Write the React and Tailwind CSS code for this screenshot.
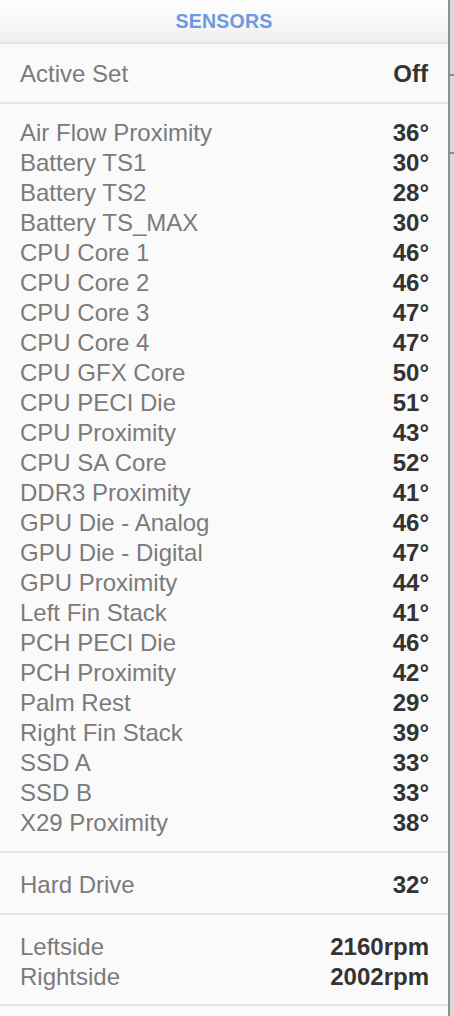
const sensors = [
  ["Air Flow Proximity", "36°"],
  ["Battery TS1", "30°"],
  ["Battery TS2", "28°"],
  ["Battery TS_MAX", "30°"],
  ["CPU Core 1", "46°"],
  ["CPU Core 2", "46°"],
  ["CPU Core 3", "47°"],
  ["CPU Core 4", "47°"],
  ["CPU GFX Core", "50°"],
  ["CPU PECI Die", "51°"],
  ["CPU Proximity", "43°"],
  ["CPU SA Core", "52°"],
  ["DDR3 Proximity", "41°"],
  ["GPU Die - Analog", "46°"],
  ["GPU Die - Digital", "47°"],
  ["GPU Proximity", "44°"],
  ["Left Fin Stack", "41°"],
  ["PCH PECI Die", "46°"],
  ["PCH Proximity", "42°"],
  ["Palm Rest", "29°"],
  ["Right Fin Stack", "39°"],
  ["SSD A", "33°"],
  ["SSD B", "33°"],
  ["X29 Proximity", "38°"],
];

const fans = [
  ["Leftside", "2160rpm"],
  ["Rightside", "2002rpm"],
];

function Row({ label, value }) {
  return (
    <div className="flex items-center justify-between h-[30px]">
      <span className="text-[#7b7b7b]">{label}</span>
      <span className="font-bold text-[#333333]">{value}</span>
    </div>
  );
}

export default function App() {
  return (
    <div
      className="flex w-[454px] h-[1016px] overflow-hidden bg-[#fafafa]"
      style={{ fontFamily: "'Liberation Sans', Arial, sans-serif" }}
    >
      <div className="w-[450px] shrink-0 border-r-2 border-[#8f8f8f] text-[24px] leading-[30px]">
        {/* header */}
        <div className="h-[44px] flex items-center justify-center bg-gradient-to-b from-white to-[#efefef] border-b-2 border-[#e3e3e3]">
          <span className="text-[19.5px] font-bold text-[#6c9ae0] tracking-[0.2px] -mt-[1px]">
            SENSORS
          </span>
        </div>

        <div className="h-[60px] pt-[2px] flex items-center justify-between px-[20px] border-b-2 border-[#e3e3e3]">
          <span className="text-[#7b7b7b]">Active Set</span>
          <span className="font-bold text-[#333333]">Off</span>
        </div>

        <div className="pt-[14px] pb-[13px] pl-[20px] pr-[19px] border-b-2 border-[#e3e3e3]">
          {sensors.map(([l, v]) => (
            <Row key={l} label={l} value={v} />
          ))}
        </div>

        <div className="h-[62px] pt-[3px] flex items-center justify-between pl-[20px] pr-[19px] border-b-2 border-[#e3e3e3]">
          <span className="text-[#7b7b7b]">Hard Drive</span>
          <span className="font-bold text-[#333333]">32°</span>
        </div>

        <div className="pt-[17px] pb-[12px] pl-[20px] pr-[19px] border-b-2 border-[#e3e3e3]">
          {fans.map(([l, v]) => (
            <Row key={l} label={l} value={v} />
          ))}
        </div>
      </div>

      {/* sliver of the view behind */}
      <div className="flex-1 bg-[#d9d9d9] flex flex-col">
        <div className="h-[74px]" />
        <div className="h-[2px] bg-[#8a8a8a]" />
        <div className="h-[76px]" />
        <div className="h-[2px] bg-[#8a8a8a]" />
      </div>
    </div>
  );
}
